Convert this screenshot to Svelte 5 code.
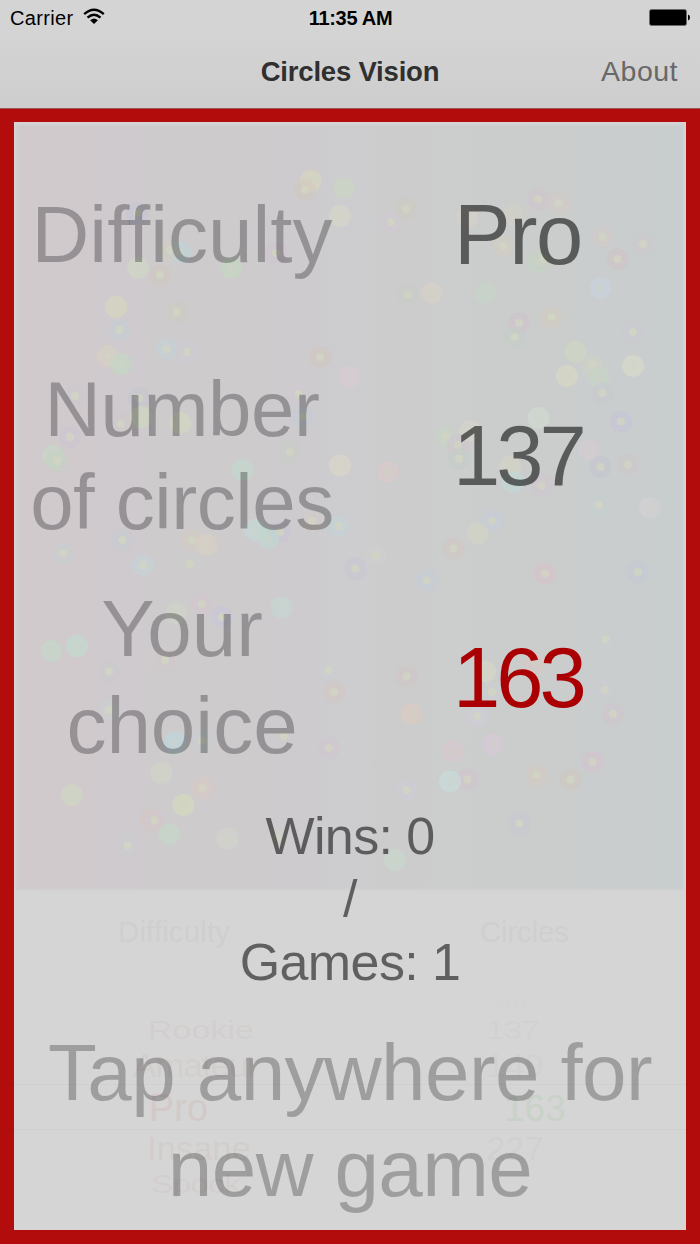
<script lang="ts">
  // Result screen: the round's summary lies over the faded game board and pickers.
  type Dot = [x: number, y: number, color: string, solid?: boolean];

  let difficulty = $state("Pro");
  let circles = $state(137);
  let choice = $state(163);
  let wins = $state(0);
  let games = $state(1);

  // Solid dots have a low contrast centre.
  const dots: Dot[] = [
    [311, 181, "#d6d5bf", true], [305, 190, "#d2c7bd"], [344, 188, "#c9d5c3", true], [340, 216, "#d5d6ca", true],
    [137, 213, "#c4c3d8"], [180, 252, "#bfd3d5", true], [170, 250, "#d0cec4"], [276, 253, "#d2c3cf"],
    [138, 268, "#cfd5c5", true], [160, 275, "#cec7bd"], [231, 268, "#c4d5c2", true], [116, 307, "#d5d5bf", true],
    [177, 312, "#cec9c0"], [119.5, 330, "#c4d0d8"], [166.5, 349, "#bfd4d8"], [187, 352, "#cbc9d3"],
    [107.5, 356, "#d5cfc3", true], [121, 364, "#c6d5c4", true], [320, 357, "#d1c6be"], [349, 377, "#d5ccd3", true],
    [406, 209, "#cbc9bf"], [391, 222, "#d0c8d1"], [467, 217, "#d5cfc8", true], [513, 215, "#d0cdc5", true],
    [538, 199, "#d1c1c9"], [558.5, 203, "#d4cac6"], [503, 246, "#d5cbc0"], [538, 262, "#c4d3c4", true],
    [543, 259, "#c9cec6"], [602.5, 237, "#d2cac7"], [643, 244, "#cdc9cb"], [617.5, 259, "#cfc2c5"],
    [600.5, 288, "#c8d0da", true], [408, 295, "#c6cbc3"], [432, 293, "#d5cfc7", true], [485.5, 293, "#c5d3c7", true],
    [551.5, 317, "#d4ccc0"], [519, 323, "#d0c2cd"], [514.5, 337, "#c3cec4"], [633, 332, "#cac9d4"],
    [575.5, 352, "#cdd5c4", true], [592, 365, "#cfd1c5"], [599, 378, "#c5d3c6", true], [633, 366, "#d5d8c8", true],
    [567, 376, "#d7d6c6", true], [75, 396, "#cbc8ce"], [139, 398, "#c5c5d2"], [141, 417, "#cfd5bf", true],
    [180.5, 423, "#d2d5c0", true], [121, 424, "#d0c8ca"], [70, 437, "#cbc4d2"], [53, 456, "#c8d5c4", true],
    [57, 461, "#c2d1c2"], [298.5, 394, "#d0c9d2"], [303, 417, "#c3cdd6"], [290, 452, "#c6cdc4"],
    [242.5, 470, "#c2d7cc", true], [340, 465.5, "#d8d7c8", true], [602.5, 393, "#c8c8d0"], [538.5, 418, "#d0d8d2", true],
    [621, 421.5, "#c3c3d9"], [445.5, 436.5, "#c6d5c4"], [470, 431, "#d4d3c8", true], [458, 445, "#d2c4cd"],
    [459, 458.5, "#c2d0c5"], [589, 450, "#d2cbd3", true], [600.5, 467, "#c2c3d2"], [628, 464.5, "#cec5ca"],
    [388, 472, "#d5cbc8", true], [510, 467, "#d3d2c5", true], [513, 482, "#c2d5d4", true], [541.5, 485.5, "#d1c4d1"],
    [599, 504.5, "#c4d0cf"], [650, 507.5, "#d1cfd3", true], [492.5, 521, "#c5cbd9"], [477.5, 533.5, "#d1d2c4", true],
    [453.5, 548.5, "#d1c8c4"], [376, 555, "#cfcfcf"], [355.5, 568.5, "#c7c4d3"], [426.5, 580.5, "#c4ccd9"],
    [545, 573.5, "#d9c0c9"], [638, 572, "#c3c8d6"], [312, 521, "#d4cbc6"], [338.5, 526, "#c2d3d5"],
    [280, 532, "#c9c4d5"], [255, 530, "#c3d8d6", true], [268, 538, "#c0d5cf", true], [122.5, 540, "#c5c9d6"],
    [63.5, 553, "#c3cecf"], [192, 540, "#d3ccbf"], [206.5, 544.5, "#d7cfc4", true], [143, 565, "#c4d5d9"],
    [190, 564, "#c9cdc7"], [176, 613, "#cdd3c7", true], [202, 604, "#d1c5cd"], [222, 617, "#c5c5dc"],
    [281.5, 607.5, "#c5d6d2", true], [51.5, 651, "#c4d6c9", true], [77, 646, "#c3d9cf", true], [109, 671.5, "#ccc9d0"],
    [165, 660, "#d1c8c9"], [109, 710, "#cccdd1"], [175, 743, "#bdd6da", true], [202, 741, "#c5d0d1"],
    [328.5, 670, "#ccced3"], [334, 692, "#d6c5c2"], [284, 736, "#d1cacb"], [329, 748, "#d3c3d0"],
    [161.5, 773, "#d0d4c7", true], [202.5, 788, "#dac9c2"], [72, 795, "#cfd6c2", true], [183.5, 805, "#d4d8bf", true],
    [150, 820, "#d3c8c4", true], [154.5, 820.5, "#d1c6cc"], [169.5, 834, "#c5d6c8", true], [127.5, 845.5, "#c9ced0"],
    [227.5, 839, "#d0d3cb", true], [277, 838, "#d1ceca"], [605.5, 639.5, "#c9cece"], [535, 663, "#d5c7c6", true],
    [406.5, 676.5, "#d0c4c6"], [485, 671.5, "#d5d6c7", true], [492, 692, "#cccdd1"], [605, 690, "#cacbd3"],
    [411.5, 714, "#d8cbc1", true], [477, 716, "#cfcdda"], [613, 714, "#d0c3cf"], [453.5, 751, "#d6c7cd", true],
    [493, 744.5, "#d4cad5", true], [592.5, 761.5, "#d5bfd0"], [536.5, 775, "#d5c9be"], [570.5, 779.5, "#cfc8be"],
    [467.5, 779.5, "#cfc3cd"], [450, 781.5, "#c9dad9", true], [406.5, 790, "#ccccd8"], [519.5, 823.5, "#c7c5d3"],
    [395, 860, "#c7d7cb", true],
  ];

  // Wheel rows shrink towards the edges of the picker.
  const wheel = [
    { y: 1008, size: 30, squash: 0.35, left: "", x: 0, w: 0, right: "95", rx: 495, rw: 33, fade: 0.35 },
    { y: 1039, size: 34, squash: 0.76, left: "Rookie", x: 148, w: 106, right: "137", rx: 486, rw: 54, fade: 0.6 },
    { y: 1077, size: 35, squash: 0.94, left: "Amateur", x: 133, w: 126, right: "149", rx: 486, rw: 58, fade: 0.65 },
    { y: 1160, size: 35, squash: 0.96, left: "Insane", x: 147, w: 104, right: "227", rx: 486, rw: 58, fade: 0.7 },
    { y: 1193, size: 34, squash: 0.76, left: "Spock", x: 151, w: 90, right: "", rx: 0, rw: 0, fade: 0.6 },
  ];
</script>

<div class="screen">
  <header>
    <div class="status">
      <div class="carrier">
        <span>Carrier</span>
        <svg width="22" height="18" viewBox="0 0 22 18" aria-hidden="true">
          <path d="M1.2 6.1Q11 -2.7 20.8 6.1M4.5 9.6Q11 3.9 17.5 9.6" fill="none" stroke="#000" stroke-width="2.4" />
          <path d="M7.1 12.3Q11 8.9 14.9 12.3L11 16Z" />
        </svg>
      </div>
      <span class="time">11:35 AM</span>
      <svg class="battery" width="42" height="17" viewBox="0 0 42 17" aria-hidden="true">
        <rect x=".5" y=".5" width="37" height="16" rx="2" fill="#000" stroke="#686868" />
        <path d="M39 5.5Q41 6.2 41 8.5T39 11.5Z" />
      </svg>
    </div>
    <nav>
      <span></span>
      <h1>Circles Vision</h1>
      <button type="button">About</button>
    </nav>
  </header>

  <main>
    <svg class="backdrop" viewBox="0 109 700 1135" aria-hidden="true">
      <defs>
        <linearGradient id="board">
          <stop offset="0" stop-color="#d0cacd" />
          <stop offset=".5" stop-color="#cdccce" />
          <stop offset=".82" stop-color="#cbcdcc" />
          <stop offset="1" stop-color="#c8cdcf" />
        </linearGradient>
        <filter id="edge"><feGaussianBlur stdDeviation="1" /></filter>
      </defs>
      <rect x="16.5" y="125" width="666.5" height="764.5" fill="url(#board)" filter="url(#edge)" />
      {#each dots as [x, y, color, solid]}
        <circle cx={x} cy={y} r="11" fill={color} opacity={solid ? 0.75 : 0.5} />
        <circle cx={x} cy={y} r="4" fill="#d2d5c2" opacity={solid ? 0.3 : 0.75} />
      {/each}

      <g class="ghost">
        <text x="118" y="942" font-size="29.5" textLength="112">Difficulty</text>
        <text x="480" y="942" font-size="29.5" textLength="89">Circles</text>
        {#each wheel as row}
          <g transform="translate(0 {row.y}) scale(1 {row.squash})" opacity={row.fade}>
            {#if row.left}
              <text class="warm" x={row.x} y="0" font-size={row.size} textLength={row.w}>{row.left}</text>
            {/if}
            {#if row.right}
              <text x={row.rx} y="0" font-size={row.size} textLength={row.rw}>{row.right}</text>
            {/if}
          </g>
        {/each}
        <text class="picked-level" x="149" y="1121" font-size="38">Pro</text>
        <text class="picked-count" x="504" y="1121" font-size="37">163</text>
        <path d="M0 1084.5H700M0 1129.5H700" stroke="#000" stroke-opacity=".022" />
      </g>
    </svg>

    <div class="row">
      <span class="label">Difficulty</span>
      <span class="value">{difficulty}</span>
    </div>
    <div class="row">
      <span class="label count">Number<br />of circles</span>
      <span class="value number">{circles}</span>
    </div>
    <div class="row">
      <span class="label">Your<br />choice</span>
      <span class="value number wrong">{choice}</span>
    </div>
    <div class="score">Wins: {wins}<br />/<br />Games: {games}</div>
    <div class="hint">Tap anywhere for<br />new game</div>
  </main>
</div>

<style>
  :global(body) {
    margin: 0;
    background: #b30c0c;
  }
  .screen {
    display: flex;
    flex-direction: column;
    width: 700px;
    height: 1244px;
    overflow: hidden;
    font-family: "Liberation Sans", Arial, sans-serif;
    font-variant-ligatures: none;
  }
  header {
    box-sizing: border-box;
    height: 109px;
    background: linear-gradient(#d4d4d4 35%, #cdcdcd);
    border-bottom: 1px solid #9b5553;
  }
  .status {
    display: grid;
    grid-template-columns: 1fr auto 1fr;
    align-items: center;
    height: 35px;
    padding: 0 9px 0 10px;
    font-size: 20px;
    color: #000;
  }
  .carrier {
    display: flex;
    align-items: center;
    gap: 9px;
    letter-spacing: 0.35px;
  }
  .carrier span,
  .time {
    padding-top: 2px;
  }
  .carrier svg {
    margin-bottom: 2px;
  }
  .time {
    font-weight: bold;
    letter-spacing: -0.3px;
  }
  .battery {
    justify-self: end;
  }
  nav {
    display: grid;
    grid-template-columns: 1fr auto 1fr;
    align-items: center;
    height: 73px;
    padding: 0 22px;
  }
  h1 {
    margin: 0;
    font-size: 27.5px;
    letter-spacing: -0.2px;
    color: #303030;
  }
  button {
    justify-self: end;
    padding: 0;
    border: 0;
    background: none;
    font: inherit;
    font-size: 28.5px;
    letter-spacing: 0.5px;
    color: #686868;
  }
  main {
    position: relative;
    box-sizing: border-box;
    flex: 1;
    display: grid;
    grid-template-rows: repeat(5, minmax(0, 1fr));
    border: 14px solid #b30c0c;
    border-top-width: 13px;
    background: #d5d5d5;
    background-clip: padding-box;
    text-align: center;
  }
  .backdrop {
    position: absolute;
    top: -13px;
    left: -14px;
    width: 700px;
    height: 1135px;
  }
  .ghost text {
    fill: #cfcfcf;
  }
  .ghost .warm {
    fill: #d1cbc8;
  }
  .ghost .picked-level {
    fill: #d4c9c9;
  }
  .ghost .picked-count {
    fill: #c9d2c8;
  }
  .row {
    position: relative;
    display: grid;
    grid-template-columns: 1fr 1fr;
    align-items: center;
    padding-top: 3px;
  }
  .label {
    font-size: 80px;
    line-height: 97px;
    color: rgba(0, 0, 0, 0.28);
  }
  .count {
    font-size: 78px;
    line-height: 93px;
    letter-spacing: -0.4px;
  }
  .value {
    font-size: 85px;
    line-height: 97px;
    letter-spacing: -1.5px;
    color: rgba(0, 0, 0, 0.56);
  }
  .number {
    letter-spacing: -4px;
  }
  .wrong {
    color: #ab0003;
  }
  .score,
  .hint {
    position: relative;
    align-self: center;
    padding-top: 3px;
  }
  .score {
    font-size: 52px;
    line-height: 63px;
    letter-spacing: -0.6px;
    color: rgba(0, 0, 0, 0.55);
  }
  .hint {
    font-size: 80px;
    line-height: 96px;
    letter-spacing: -0.6px;
    color: rgba(0, 0, 0, 0.26);
  }
</style>
